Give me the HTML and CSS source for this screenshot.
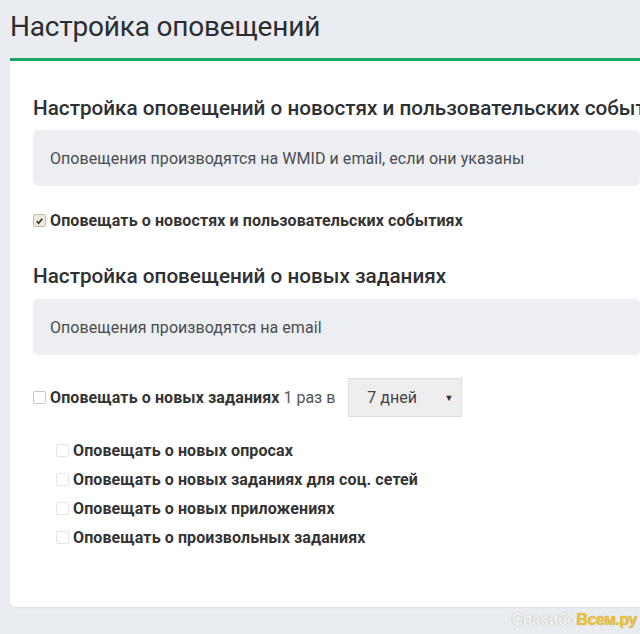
FILE: index.html
```html
<!DOCTYPE html>
<html lang="ru">
<head>
<meta charset="utf-8">
<link rel="stylesheet" href="styles.css">
</head>
<body>
<div class="page">
  <h1 class="title">Настройка оповещений</h1>
  <div class="card">
    <h2 class="section-title">Настройка оповещений о новостях и пользовательских событиях</h2>
    <div class="info">Оповещения производятся на WMID и email, если они указаны</div>
    <label class="check-row first-check">
      <span class="box checked"><svg viewBox="0 0 12 12" width="12" height="12"><path d="M3 6.3 L5 8.4 L9 3.6" fill="none" stroke="#333" stroke-width="1.8"/></svg></span>
      <b>Оповещать о новостях и пользовательских событиях</b>
    </label>

    <h2 class="section-title second">Настройка оповещений о новых заданиях</h2>
    <div class="info">Оповещения производятся на email</div>
    <div class="check-row select-row">
      <span class="box"></span>
      <b>Оповещать о новых заданиях</b><span class="light">&nbsp;1 раз в</span>
      <div class="select"><span>7 дней</span><span class="arrow">▼</span></div>
    </div>
    <div class="sub-list">
      <label class="check-row sub"><span class="box faint"></span><b>Оповещать о новых опросах</b></label>
      <label class="check-row sub"><span class="box faint"></span><b>Оповещать о новых заданиях для соц. сетей</b></label>
      <label class="check-row sub"><span class="box faint"></span><b>Оповещать о новых приложениях</b></label>
      <label class="check-row sub"><span class="box faint"></span><b>Оповещать о произвольных заданиях</b></label>
    </div>
  </div>
  <div class="watermark">Спасибо<span class="wm-accent">Всем.ру</span></div>
</div>
</body>
</html>
```
FILE: styles.css
```css
html, body {
  margin: 0;
  padding: 0;
  background: #e9ecf1;
  overflow: hidden;
}
body {
  font-family: Roboto, "Noto Sans", sans-serif;
  color: #333;
  width: 640px;
  height: 634px;
}
.page {
  padding-left: 10px;
}
.title {
  margin: 0;
  padding-top: 9px;
  height: 49px;
  font-size: 28px;
  font-weight: 400;
  color: #2b2d30;
  line-height: 36px;
  letter-spacing: -0.2px;
}
.card {
  background: #fff;
  border-top: 3px solid #1fa463;
  border-radius: 0 0 0 6px;
  padding: 35px 0 0 23px;
  box-sizing: border-box;
  height: 549px;
  overflow: hidden;
  box-shadow: 0 1px 2px rgba(0,0,0,0.06);
}
.section-title {
  margin: 0;
  font-size: 20.7px;
  font-weight: 500;
  color: #2e3033;
  line-height: 24px;
  white-space: nowrap;
}
.section-title.second {
  margin-top: 34px;
}
.info {
  margin-top: 10px;
  background: #eceef2;
  border-radius: 5px;
  height: 56px;
  display: flex;
  align-items: center;
  padding-left: 17px;
  font-size: 16px;
  color: #4a4c50;
  letter-spacing: 0.05px;
}
.section-title.second + .info {
  margin-top: 11px;
}
.check-row {
  display: flex;
  align-items: center;
  font-size: 16px;
  color: #333;
  white-space: nowrap;
  height: 19px;
}
.check-row b {
  font-weight: 700;
  letter-spacing: 0.1px;
}
.first-check {
  margin-top: 25px;
}
.box {
  width: 11px;
  height: 11px;
  border: 1px solid #c8c8c8;
  border-radius: 2px;
  background: #fff;
  margin-right: 4px;
  display: inline-flex;
  align-items: center;
  justify-content: center;
  flex: none;
}
.box.checked {
  background: #efe7d8;
  border-color: #c9bda8;
}
.box.faint {
  border-color: #e6e6e6;
}
.select-row {
  margin-top: 23px;
  height: 39px;
}
.light {
  font-weight: 400;
  color: #555;
}
.select {
  margin-left: 13px;
  width: 114px;
  height: 39px;
  box-sizing: border-box;
  background: #eeeeee;
  border: 1px solid #dcdcdc;
  display: flex;
  align-items: center;
  justify-content: space-between;
  padding: 0 8px 0 18px;
  font-size: 16px;
  color: #444;
}
.arrow {
  font-size: 9px;
  color: #333;
}
.sub-list {
  margin-top: 25px;
  padding-left: 23px;
  display: flex;
  flex-direction: column;
  gap: 12px;
}
.check-row.sub {
  height: 17px;
}
.watermark {
  text-align: right;
  padding-right: 3px;
  margin-top: 4px;
  font-family: "Liberation Sans Narrow", "Liberation Sans", sans-serif;
  font-size: 16px;
  font-weight: 700;
  color: #f4f4f4;
  text-shadow: 0 0 1px #999;
  letter-spacing: -0.5px;
}
.wm-accent {
  color: #f2c230;
}
```
